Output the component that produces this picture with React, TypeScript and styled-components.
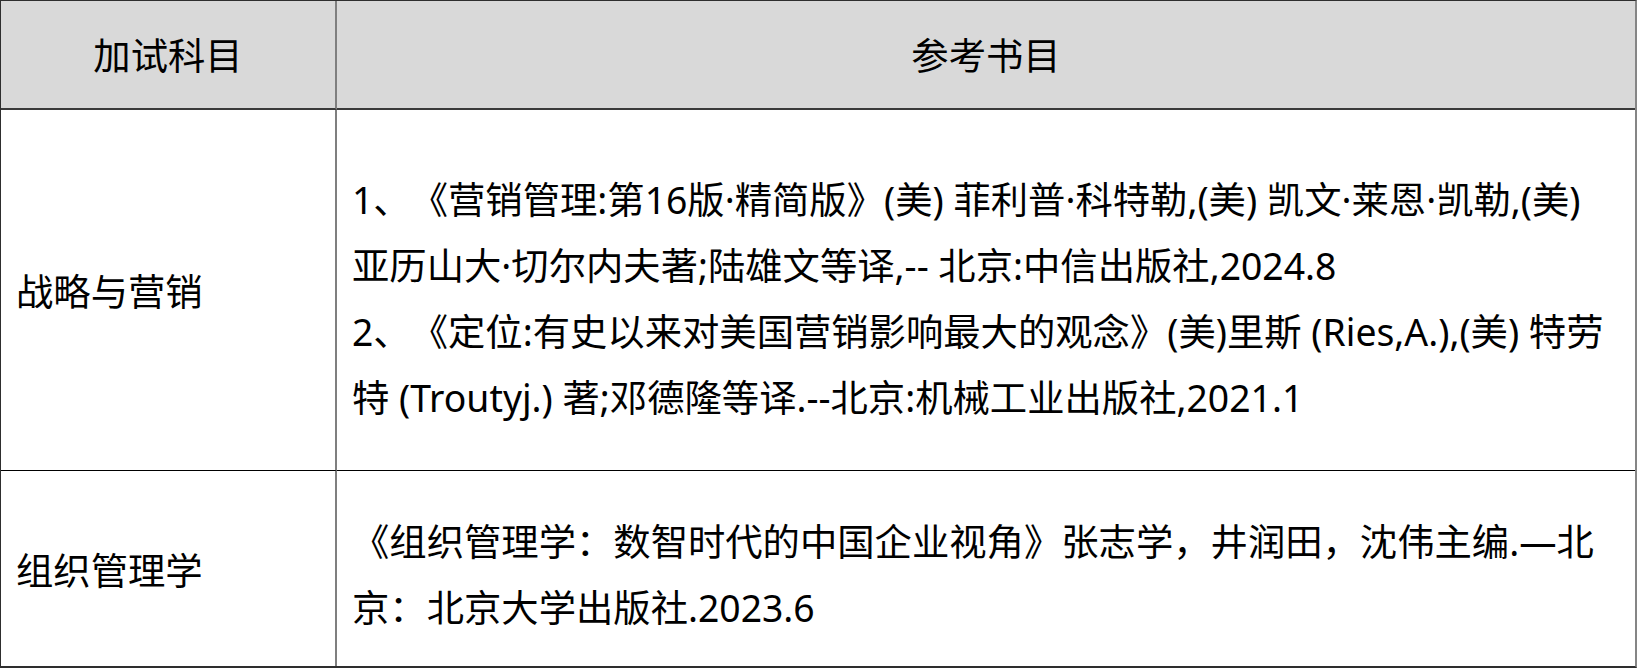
import React from 'react'
import styled, { createGlobalStyle } from 'styled-components'

const GlobalStyle = createGlobalStyle`
    * {
        box-sizing: border-box;
    }
    body {
        margin: 0;
        background: #ffffff;
        font-family: "Noto Sans", "Noto Sans CJK SC", sans-serif;
        color: #000;
    }
`

interface BookRow {
    subject: string
    lines: string[]
}

const rows: BookRow[] = [
    {
        subject: '战略与营销',
        lines: [
            '1、《营销管理:第16版·精简版》(美) 菲利普·科特勒,(美) 凯文·莱恩·凯勒,(美)',
            '亚历山大·切尔内夫著;陆雄文等译,-- 北京:中信出版社,2024.8',
            '2、《定位:有史以来对美国营销影响最大的观念》(美)里斯 (Ries,A.),(美) 特劳',
            '特 (Troutyj.) 著;邓德隆等译.--北京:机械工业出版社,2021.1',
        ],
    },
    {
        subject: '组织管理学',
        lines: [
            '《组织管理学：数智时代的中国企业视角》张志学，井润田，沈伟主编.—北',
            '京：北京大学出版社.2023.6',
        ],
    },
]

const App = () => {
    return (
        <>
            <GlobalStyle />
            <Table>
                <HeadCell $first>加试科目</HeadCell>
                <HeadCell>参考书目</HeadCell>
                {rows.map((row, i) => {
                    const last = i === rows.length - 1
                    return (
                        <React.Fragment key={row.subject}>
                            <SubjectCell $last={last}>{row.subject}</SubjectCell>
                            <BooksCell $last={last}>
                                {row.lines.map((line) => (
                                    <Line key={line}>{line}</Line>
                                ))}
                            </BooksCell>
                        </React.Fragment>
                    )
                })}
            </Table>
        </>
    )
}

const Table = styled.div`
    display: grid;
    grid-template-columns: 336px 1298px;
    grid-template-rows: 109px 361px 195px;
    width: fit-content;
    border-top: 1px solid #2e2e2e;
    border-left: 1px solid #2e2e2e;
    border-right: 2px solid #858585;
    border-bottom: 2px solid #2e2e2e;
    font-size: 37.33px;
    text-spacing-trim: space-all;
`

const HeadCell = styled.div<{ $first?: boolean }>`
    display: flex;
    align-items: center;
    justify-content: center;
    padding-top: 2px;
    background: #d9d9d9;
    border-bottom: 2px solid #3a3a3a;
    border-right: ${(p) => (p.$first ? '2px solid #7f7f7f' : 'none')};
    line-height: 1;
`

const SubjectCell = styled.div<{ $last?: boolean }>`
    display: flex;
    align-items: center;
    padding-left: 15px;
    border-right: 2px solid #7f7f7f;
    border-bottom: ${(p) => (p.$last ? 'none' : '1px solid #000')};
`

const BooksCell = styled.div<{ $last?: boolean }>`
    display: flex;
    flex-direction: column;
    justify-content: center;
    padding: ${(p) => (p.$last ? '13px' : '18px')} 0 0 15px;
    border-bottom: ${(p) => (p.$last ? 'none' : '1px solid #000')};
`

const Line = styled.div`
    line-height: 66px;
    white-space: nowrap;
`

export default App
